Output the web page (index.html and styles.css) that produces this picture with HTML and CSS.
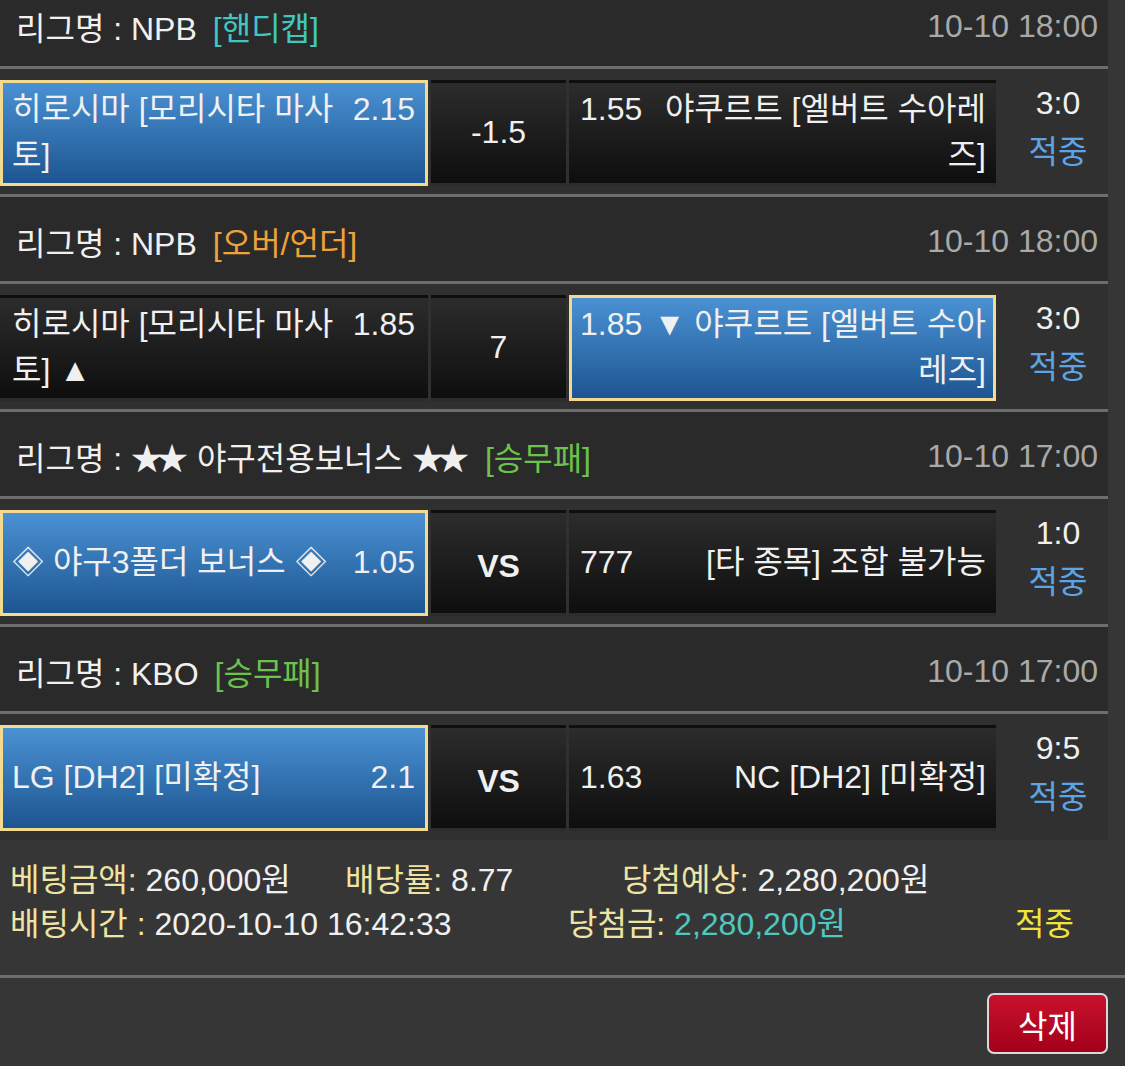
FILE: index.html
```html
<!DOCTYPE html>
<html lang="ko">
<head>
<meta charset="UTF-8">
<meta name="viewport" content="width=device-width, initial-scale=1.0">
<title>Bet Detail</title>
<link rel="stylesheet" href="styles.css">
</head>
<body>
    <div class="board">
        <div class="league">
            <div class="league-head">
                <span class="league-name">리그명 : NPB</span>
                <span class="tag tag-handicap">[핸디캡]</span>
                <span class="league-time">10-10 18:00</span>
            </div>
            <div class="match">
                <div class="pick pick-home selected">
                    <div class="pick-body">
                        <span class="team">히로시마 [모리시타 마사토]</span>
                        <span class="odds">2.15</span>
                    </div>
                </div>
                <div class="pick pick-mid">-1.5</div>
                <div class="pick pick-away">
                    <div class="pick-body">
                        <span class="odds">1.55</span>
                        <span class="team">야쿠르트 [엘버트 수아레즈]</span>
                    </div>
                </div>
                <div class="result">
                    <div class="score">3:0</div>
                    <div class="status">적중</div>
                </div>
            </div>
        </div>

        <div class="league">
            <div class="league-head">
                <span class="league-name">리그명 : NPB</span>
                <span class="tag tag-ou">[오버/언더]</span>
                <span class="league-time">10-10 18:00</span>
            </div>
            <div class="match">
                <div class="pick pick-home">
                    <div class="pick-body">
                        <span class="team">히로시마 [모리시타 마사토] ▲</span>
                        <span class="odds">1.85</span>
                    </div>
                </div>
                <div class="pick pick-mid">7</div>
                <div class="pick pick-away selected">
                    <div class="pick-body">
                        <span class="odds">1.85</span>
                        <span class="team">▼ 야쿠르트 [엘버트 수아레즈]</span>
                    </div>
                </div>
                <div class="result">
                    <div class="score">3:0</div>
                    <div class="status">적중</div>
                </div>
            </div>
        </div>

        <div class="league">
            <div class="league-head">
                <span class="league-name">리그명 : <span class="stars">★★</span> 야구전용보너스 <span class="stars">★★</span></span>
                <span class="tag tag-wdl">[승무패]</span>
                <span class="league-time">10-10 17:00</span>
            </div>
            <div class="match">
                <div class="pick pick-home selected">
                    <div class="pick-body">
                        <span class="team">◈ 야구3폴더 보너스 ◈</span>
                        <span class="odds">1.05</span>
                    </div>
                </div>
                <div class="pick pick-mid vs">VS</div>
                <div class="pick pick-away">
                    <div class="pick-body">
                        <span class="odds">777</span>
                        <span class="team">[타 종목] 조합 불가능</span>
                    </div>
                </div>
                <div class="result">
                    <div class="score">1:0</div>
                    <div class="status">적중</div>
                </div>
            </div>
        </div>

        <div class="league">
            <div class="league-head">
                <span class="league-name">리그명 : KBO</span>
                <span class="tag tag-wdl">[승무패]</span>
                <span class="league-time">10-10 17:00</span>
            </div>
            <div class="match">
                <div class="pick pick-home selected">
                    <div class="pick-body">
                        <span class="team">LG [DH2] [미확정]</span>
                        <span class="odds">2.1</span>
                    </div>
                </div>
                <div class="pick pick-mid vs">VS</div>
                <div class="pick pick-away">
                    <div class="pick-body">
                        <span class="odds">1.63</span>
                        <span class="team">NC [DH2] [미확정]</span>
                    </div>
                </div>
                <div class="result">
                    <div class="score">9:5</div>
                    <div class="status">적중</div>
                </div>
            </div>
        </div>
    </div>

    <div class="summary">
        <div class="summary-line">
            <span class="col-a"><span class="label">베팅금액:</span> 260,000원</span>
            <span class="col-b"><span class="label">배당률:</span> 8.77</span>
            <span><span class="label">당첨예상:</span> 2,280,200원</span>
        </div>
        <div class="summary-line">
            <span class="col-a wide"><span class="label">배팅시간 :</span> 2020-10-10 16:42:33</span>
            <span class="col-b wide"><span class="label">당첨금:</span> <span class="win">2,280,200원</span></span>
            <span class="hit">적중</span>
        </div>
    </div>

    <div class="actions">
        <button type="button" class="btn-delete">삭제</button>
    </div>
</body>
</html>
```

FILE: styles.css
```css
/* bet slip detail */
* {
    box-sizing: border-box;
}
body {
    margin: 0;
    background: #363636;
    color: #f0f0f0;
    font-family: "Liberation Sans", "Noto Sans CJK KR", sans-serif;
    font-size: 32px;
    font-feature-settings: "palt";
    overflow: hidden;
}
.board {
    width: 1108px;
    margin-top: -18px;
}
.league-head {
    display: flex;
    align-items: center;
    height: 87px;
    padding: 4px 10px 0 16px;
    background: #2a2a2a;
    border-bottom: 3px solid #6d6d6d;
    white-space: nowrap;
}
.stars {
    letter-spacing: -7px;
    margin-right: 7px;
}
.tag {
    margin-left: 16px;
}
.tag-handicap {
    color: #40c7c0;
}
.tag-ou {
    color: #f0a23a;
}
.tag-wdl {
    color: #6cc24a;
}
.league-time {
    margin-left: auto;
    color: #a9a9a9;
}
.match {
    display: flex;
    height: 128px;
    padding-top: 11px;
    background: #303030;
    border-bottom: 3px solid #6d6d6d;
}
.league:last-child .match {
    height: 126px;
    border-bottom: 0;
}
.pick {
    display: flex;
    align-items: center;
    height: 106px;
    padding-bottom: 3px;
    border: 3px solid transparent;
    background: linear-gradient(#2c2c2c, #0e0e0e);
    line-height: 46px;
}
.pick-body {
    display: flex;
    align-items: flex-start;
    width: 100%;
}
.pick-home {
    width: 428px;
    padding-left: 9px;
    padding-right: 10px;
}
.pick-home .team {
    flex: 1;
    margin-right: 4px;
}
.pick-mid {
    width: 135px;
    margin-left: 3px;
    justify-content: center;
}
.vs {
    font-weight: bold;
    padding-top: 8px;
}
.pick-away {
    width: 427px;
    margin-left: 3px;
    padding-left: 8px;
    padding-right: 7px;
}
.pick-away .team {
    flex: 1;
    margin-left: 8px;
    text-align: right;
}
.selected {
    background: linear-gradient(#4a91d3, #1d5591);
    border-color: #f3da8e;
}
.result {
    width: 112px;
    padding-left: 12px;
    text-align: center;
    line-height: 46px;
}
.status {
    padding-top: 3px;
    color: #5ca4e6;
}
.summary {
    padding: 18px 0 29px 10px;
    border-bottom: 3px solid #6d6d6d;
    line-height: 44px;
}
.summary-line {
    display: flex;
    white-space: nowrap;
}
.col-a {
    width: 335px;
}
.col-b {
    width: 277px;
}
.col-a.wide {
    width: 558px;
}
.col-b.wide {
    width: 447px;
}
.label {
    color: #efe4a3;
}
.win {
    color: #4fc8c0;
}
.hit {
    color: #f2e43c;
}
.actions {
    display: flex;
    justify-content: flex-end;
    padding: 15px 17px 0 0;
}
.btn-delete {
    width: 121px;
    height: 61px;
    border: 2px solid #d9d9d9;
    border-radius: 7px;
    background: linear-gradient(#c8122c, #a4001a);
    color: #fff;
    font: inherit;
    cursor: pointer;
}
```
